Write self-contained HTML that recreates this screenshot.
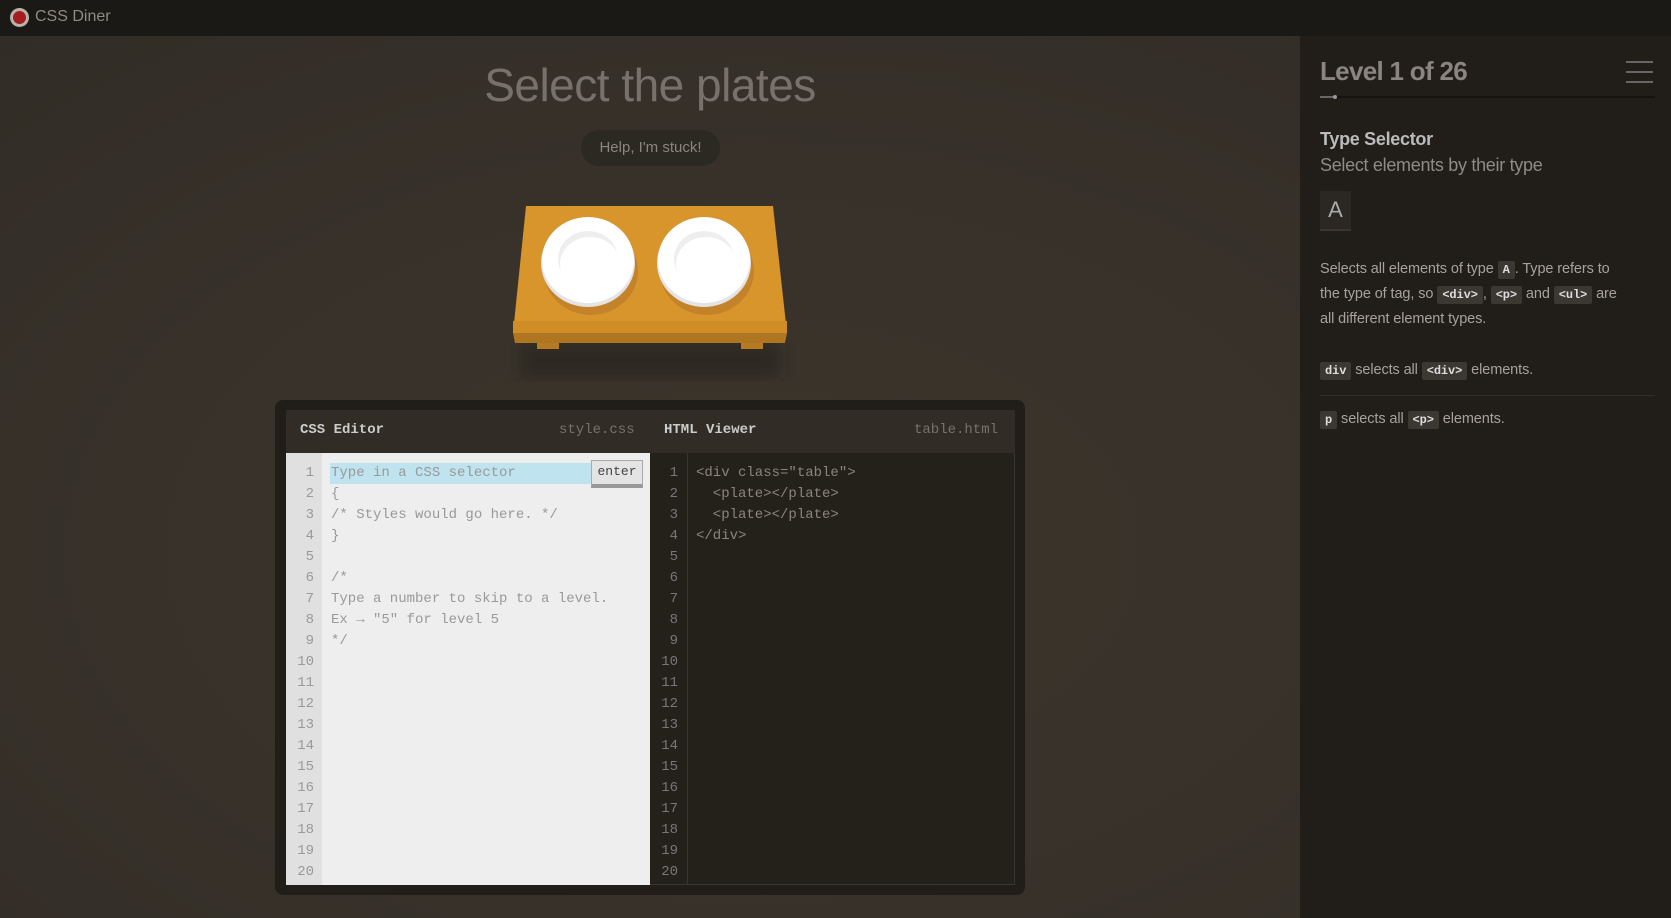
<!DOCTYPE html>
<html><head><meta charset="utf-8"><style>
*{margin:0;padding:0;box-sizing:border-box}
body{width:1671px;height:918px;overflow:hidden;font-family:"Liberation Sans",sans-serif;background:radial-gradient(ellipse at 45% 60%,#3b352b 0%,#37312a 50%,#2f2b24 100%);position:relative}
.top{position:absolute;left:0;top:0;width:1671px;height:36px;background:#1b1915}
.logo{position:absolute;left:10px;top:8px;width:19px;height:19px;border-radius:50%;background:#b8b3ad}
.logo:after{content:"";position:absolute;left:3px;top:3px;width:13px;height:13px;border-radius:50%;background:#a51d1d}
.brand{position:absolute;left:35px;top:8px;color:#8e8a84;font-size:16px}
.side{position:absolute;left:1300px;top:36px;width:371px;height:882px;background:#211e19}
.abs{position:absolute}
h1{position:absolute;left:0;width:1300px;top:58px;text-align:center;font-size:46px;font-weight:normal;color:#76716a;letter-spacing:-0.5px}
.help{position:absolute;left:581px;top:130px;width:139px;height:36px;border-radius:18px;background:#2c2822;color:#8a857e;font-size:15px;text-align:center;line-height:36px}
.mono{font-family:"Liberation Mono","DejaVu Sans Mono",monospace}
.code{background:#3b3731;color:#ddd;font-family:"Liberation Mono",monospace;font-weight:bold;font-size:12px;padding:2px 5px;border-radius:2px}
.ln{position:absolute;font-size:14px;line-height:21px}
.sp{font-size:14.5px;line-height:24px;color:#a6a29b;white-space:nowrap;letter-spacing:-0.1px}
</style></head><body>
<div class="top"><div class="logo"></div><div class="brand">CSS Diner</div></div>

<h1>Select the plates</h1>
<div class="help">Help, I'm stuck!</div>

<svg class="abs" style="left:480px;top:195px" width="340" height="200">
<defs><filter id="b"><feGaussianBlur stdDeviation="7"/></filter></defs>
<rect x="40" y="148" width="260" height="35" fill="#1e1a15" opacity="0.4" filter="url(#b)"/>
<polygon points="46,11 293,11 307,138 33,138" fill="#d8952c"/>
<polygon points="33,126 307,126 307,138 33,138" fill="#d08d26"/>
<polygon points="33,138 307,138 305,148 35,148" fill="#b07520"/>
<rect x="57" y="148" width="22" height="6" fill="#b57a22"/>
<rect x="261" y="148" width="22" height="6" fill="#b57a22"/>
<ellipse cx="111" cy="76" rx="47" ry="44" fill="#c4832a"/>
<ellipse cx="108" cy="68" rx="47" ry="44" fill="#e4e4e4"/>
<ellipse cx="108" cy="65" rx="46" ry="43" fill="#fff"/>
<ellipse cx="108" cy="64" rx="30" ry="28" fill="#eee"/>
<ellipse cx="110" cy="69" rx="30" ry="27" fill="#fff"/>
<ellipse cx="227" cy="76" rx="47" ry="44" fill="#c4832a"/>
<ellipse cx="224" cy="68" rx="47" ry="44" fill="#e4e4e4"/>
<ellipse cx="224" cy="65" rx="46" ry="43" fill="#fff"/>
<ellipse cx="224" cy="64" rx="30" ry="28" fill="#eee"/>
<ellipse cx="226" cy="69" rx="30" ry="27" fill="#fff"/>
</svg>

<div class="abs" style="left:275px;top:400px;width:750px;height:495px;background:#211e19;border-radius:8px"></div>
<div class="abs" style="left:286px;top:410px;width:729px;height:43px;background:#312c25"></div>
<div class="abs mono" style="left:300px;top:422px;color:#ccc;font-size:14px;font-weight:bold">CSS Editor</div>
<div class="abs mono" style="left:559px;top:422px;color:#77726b;font-size:14px">style.css</div>
<div class="abs mono" style="left:664px;top:422px;color:#ccc;font-size:14px;font-weight:bold">HTML Viewer</div>
<div class="abs mono" style="left:914px;top:422px;color:#77726b;font-size:14px">table.html</div>

<div class="abs" style="left:286px;top:453px;width:364px;height:432px;background:#eeeeee"></div>
<div class="abs" style="left:286px;top:453px;width:36px;height:432px;background:#e0e0e0"></div>
<div class="abs" style="left:330px;top:463px;width:262px;height:21px;background:#bfe3ef"></div>
<div class="abs mono" style="left:591px;top:460px;width:52px;height:28px;background:#e4e4e4;border:1px solid #aaa;border-bottom:4px solid #999;font-size:13px;color:#444;text-align:center;line-height:21px">enter</div>
<div class="abs" style="left:650px;top:453px;width:365px;height:432px;background:#24211b;border-right:1px solid #3a362f;border-bottom:1px solid #3a362f"></div>
<div class="abs" style="left:687px;top:453px;width:1px;height:432px;background:#3a362f"></div>

<div class="ln mono" style="left:286px;top:463px;width:28px;text-align:right;color:#999">1<br>2<br>3<br>4<br>5<br>6<br>7<br>8<br>9<br>10<br>11<br>12<br>13<br>14<br>15<br>16<br>17<br>18<br>19<br>20</div>
<div class="ln mono" style="left:650px;top:463px;width:28px;text-align:right;color:#777">1<br>2<br>3<br>4<br>5<br>6<br>7<br>8<br>9<br>10<br>11<br>12<br>13<br>14<br>15<br>16<br>17<br>18<br>19<br>20</div>
<div class="ln mono" style="left:331px;top:463px;color:#999;white-space:pre">Type in a CSS selector
{
/* Styles would go here. */
}

/*
Type a number to skip to a level.
Ex → "5" for level 5
*/</div>
<div class="ln mono" style="left:696px;top:463px;color:#8a857e;white-space:pre">&lt;div class="table"&gt;
  &lt;plate&gt;&lt;/plate&gt;
  &lt;plate&gt;&lt;/plate&gt;
&lt;/div&gt;</div>

<div class="side"></div>
<div class="abs" style="left:1320px;top:56px;font-size:26px;font-weight:bold;color:#8a857e;letter-spacing:-0.7px">Level 1 of 26</div>
<div class="abs" style="left:1626px;top:61px;width:27px;height:2px;background:#666"></div>
<div class="abs" style="left:1626px;top:71px;width:27px;height:2px;background:#666"></div>
<div class="abs" style="left:1626px;top:81px;width:27px;height:2px;background:#666"></div>
<div class="abs" style="left:1320px;top:96px;width:335px;height:2px;background:#15130f"></div>
<div class="abs" style="left:1320px;top:96px;width:14px;height:2px;background:#666"></div>
<div class="abs" style="left:1333px;top:95px;width:4px;height:4px;border-radius:50%;background:#999"></div>
<div class="abs" style="left:1320px;top:129px;font-size:18px;font-weight:bold;color:#bbb;letter-spacing:-0.3px">Type Selector</div>
<div class="abs" style="left:1320px;top:155px;font-size:18px;color:#8e8a84;letter-spacing:-0.3px">Select elements by their type</div>
<div class="abs" style="left:1320px;top:191px;width:31px;height:40px;background:#2b2823;border-bottom:2px solid #3a362f;color:#aaa;font-size:22px;text-align:center;line-height:38px">A</div>
<div class="abs sp" style="left:1320px;top:257px">Selects all elements of type <span class="code">A</span>. Type refers to<br>the type of tag, so <span class="code">&lt;div&gt;</span>, <span class="code">&lt;p&gt;</span> and <span class="code">&lt;ul&gt;</span> are<br>all different element types.</div>
<div class="abs sp" style="left:1320px;top:358px"><span class="code">div</span> selects all <span class="code">&lt;div&gt;</span> elements.</div>
<div class="abs" style="left:1320px;top:395px;width:335px;height:1px;background:#2f2b25"></div>
<div class="abs sp" style="left:1320px;top:407px"><span class="code">p</span> selects all <span class="code">&lt;p&gt;</span> elements.</div>
</body></html>
